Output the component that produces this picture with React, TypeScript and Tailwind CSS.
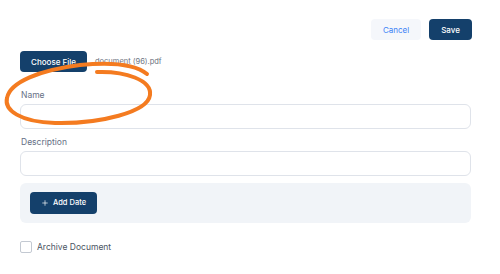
import { Plus } from 'lucide-react';

// hand-drawn highlight circle around the Name field
const Scribble = () => (
  <svg className="pointer-events-none absolute left-0 top-0" width="170" height="140" viewBox="0 0 170 140" fill="none">
    <path
      d="M97 72 C125 71 152 80 150 95 C148 112 100 124 55 123 C20 122 4 110 7 98 C10 82 40 70 80 65 C110 62 135 64 147 74"
      stroke="#f47b20"
      strokeWidth="4"
      strokeLinecap="round"
    />
  </svg>
);

export default function App() {
  return (
    <div className="relative h-[274px] w-[500px] bg-white font-['Inter',sans-serif] text-[8px]">
      <div className="flex justify-end gap-2 pr-[28px] pt-[19px]">
        <button className="h-[21px] w-[50px] rounded bg-[#f5f7fb] text-[8px] text-[#3b82f6]">Cancel</button>
        <button className="h-[21px] w-[43px] rounded bg-[#14406b] text-[8px] font-medium text-white">Save</button>
      </div>

      <div className="px-[20px] pr-[29px]">
        <div className="mt-[11px] flex items-center gap-2">
          <button className="h-[21px] w-[67px] rounded bg-[#14406b] text-[8px] font-medium text-white">Choose File</button>
          <span className="text-[7.5px] text-[#6b7280]">document (96).pdf</span>
        </div>

        <label className="mt-[17px] block pl-px text-[8.5px] leading-[12px] text-[#667085]">Name</label>
        <div className="mt-[3px] h-[25px] rounded-md border border-[#dfe3ea] bg-white" />

        <label className="mt-[7px] block pl-px text-[8.5px] leading-[12px] text-[#667085]">Description</label>
        <div className="mt-[3px] h-[25px] rounded-md border border-[#dfe3ea] bg-white" />

        <div className="mt-[7px] flex h-[40px] items-center rounded-md bg-[#f1f4f8] px-[10px]">
          <button className="flex h-[22px] w-[67px] items-center justify-center gap-1 rounded bg-[#14406b] text-[7.5px] font-medium text-white">
            <Plus size={8} strokeWidth={2} />
            Add Date
          </button>
        </div>

        <label className="mt-[18px] flex items-center gap-[5px] text-[8.5px] text-[#4b5563]">
          <span className="h-[12px] w-[12px] rounded-[2px] border border-[#c3c9d2] bg-white" />
          Archive Document
        </label>
      </div>

      <Scribble />
    </div>
  );
}
